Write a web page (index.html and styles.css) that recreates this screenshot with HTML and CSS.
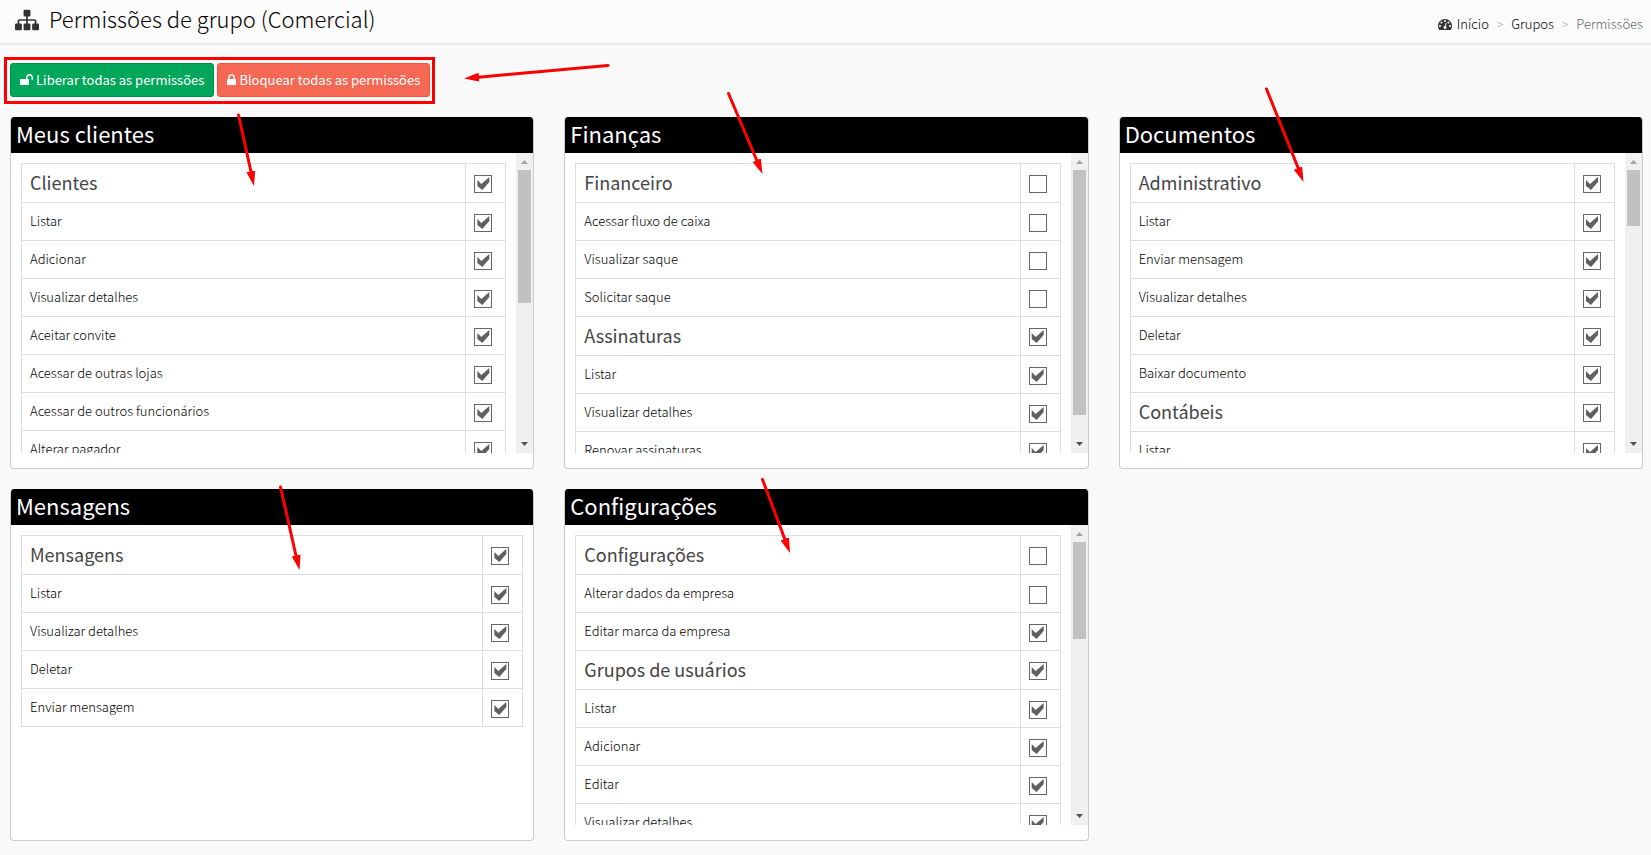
FILE: index.html
```
<!DOCTYPE html>
<html lang="pt-BR">
<head>
<meta charset="utf-8">
<title>Permissões de grupo (Comercial)</title>
<meta name="viewport" content="width=device-width, initial-scale=1">
<link rel="stylesheet" href="styles.css">
</head>
<body>
<header class="page-header">
  <h1 class="page-title">
    <svg class="title-icon" viewBox="0 0 1792 1792" aria-hidden="true"><path d="M1792 1248v320q0 40-28 68t-68 28h-320q-40 0-68-28t-28-68v-320q0-40 28-68t68-28h96v-192h-512v192h96q40 0 68 28t28 68v320q0 40-28 68t-68 28h-320q-40 0-68-28t-28-68v-320q0-40 28-68t68-28h96v-192h-512v192h96q40 0 68 28t28 68v320q0 40-28 68t-68 28h-320q-40 0-68-28t-28-68v-320q0-40 28-68t68-28h96v-192q0-52 38-90t90-38h512v-192h-96q-40 0-68-28t-28-68v-320q0-40 28-68t68-28h320q40 0 68 28t28 68v320q0 40-28 68t-68 28h-96v192h512q52 0 90 38t38 90v192h96q40 0 68 28t28 68z"/></svg>
    <span>Permissões de grupo (Comercial)</span>
  </h1>
  <nav class="breadcrumb" aria-label="Navegação">
    <a href="#"><svg class="crumb-icon" viewBox="0 0 1792 1792" aria-hidden="true"><path d="M384 1152q0-53-37.500-90.500t-90.500-37.500-90.500 37.500-37.500 90.500 37.500 90.500 90.500 37.500 90.500-37.500 37.500-90.500zm192-448q0-53-37.500-90.500t-90.500-37.500-90.500 37.500-37.500 90.500 37.500 90.500 90.500 37.500 90.500-37.500 37.500-90.500zm428 481l101-382q6-26-7.500-48.500t-38.500-29.500-48 6.500-30 39.500l-101 382q-60 5-107 43.500t-63 98.500q-20 77 20 146t117 89 146-20 89-117q16-60-6-117t-72-91zm660-33q0-53-37.500-90.500t-90.500-37.500-90.500 37.500-37.500 90.500 37.500 90.500 90.500 37.500 90.500-37.500 37.500-90.500zm-640-640q0-53-37.500-90.500t-90.500-37.500-90.500 37.500-37.500 90.500 37.500 90.500 90.500 37.500 90.500-37.500 37.500-90.500zm448 192q0-53-37.500-90.500t-90.500-37.500-90.500 37.500-37.500 90.500 37.500 90.500 90.500 37.500 90.500-37.500 37.500-90.500zm320 448q0 261-141 483-19 29-54 29h-1402q-35 0-54-29-141-221-141-483 0-182 71-348t191-286 286-191 348-71 348 71 286 191 191 286 71 348z"/></svg>Início</a>
    <span class="sep">&gt;</span>
    <a href="#">Grupos</a>
    <span class="sep">&gt;</span>
    <span class="current">Permissões</span>
  </nav>
</header>
<main class="content">
  <div class="toolbar">
    <button type="button" class="btn btn-success"><svg class="btn-icon unlock" viewBox="0 0 1664 1792" aria-hidden="true"><path d="M1664 576v256q0 26-19 45t-45 19h-64q-26 0-45-19t-19-45v-256q0-106-75-181t-181-75-181 75-75 181v192h96q40 0 68 28t28 68v576q0 40-28 68t-68 28h-960q-40 0-68-28t-28-68v-576q0-40 28-68t68-28h672v-192q0-185 131.500-316.500t316.500-131.500 316.500 131.500 131.500 316.500z"/></svg>Liberar todas as permissões</button>
    <button type="button" class="btn btn-danger"><svg class="btn-icon lock" viewBox="0 0 1152 1792" aria-hidden="true"><path d="M320 768h512v-192q0-106-75-181t-181-75-181 75-75 181v192zm832 96v576q0 40-28 68t-68 28h-960q-40 0-68-28t-28-68v-576q0-40 28-68t68-28h32v-192q0-184 132-316t316-132 316 132 132 316v192h32q40 0 68 28t28 68z"/></svg>Bloquear todas as permissões</button>
  </div>
  <div class="cards">
    <section class="card">
      <h2>Meus clientes</h2>
      <div class="pane">
        <div class="list"><table>
          <tr class="group"><th scope="row"><label for="a0">Clientes</label></th><td><input type="checkbox" id="a0" checked></td></tr>
          <tr><th scope="row"><label for="a1">Listar</label></th><td><input type="checkbox" id="a1" checked></td></tr>
          <tr><th scope="row"><label for="a2">Adicionar</label></th><td><input type="checkbox" id="a2" checked></td></tr>
          <tr><th scope="row"><label for="a3">Visualizar detalhes</label></th><td><input type="checkbox" id="a3" checked></td></tr>
          <tr><th scope="row"><label for="a4">Aceitar convite</label></th><td><input type="checkbox" id="a4" checked></td></tr>
          <tr><th scope="row"><label for="a5">Acessar de outras lojas</label></th><td><input type="checkbox" id="a5" checked></td></tr>
          <tr><th scope="row"><label for="a6">Acessar de outros funcionários</label></th><td><input type="checkbox" id="a6" checked></td></tr>
          <tr><th scope="row"><label for="a7">Alterar pagador</label></th><td><input type="checkbox" id="a7" checked></td></tr>
        </table></div>
        <div class="scrollbar" aria-hidden="true"><svg viewBox="0 0 17 17"><path class="up" d="M5 11L8.500 7L12 11z"/></svg><div class="track"><div class="thumb" style="height:50%"></div></div><svg viewBox="0 0 17 17"><path class="down" d="M5 6L8.500 10L12 6z"/></svg></div>
      </div>
    </section>
    <section class="card">
      <h2>Finanças</h2>
      <div class="pane">
        <div class="list"><table>
          <tr class="group"><th scope="row"><label for="b0">Financeiro</label></th><td><input type="checkbox" id="b0"></td></tr>
          <tr><th scope="row"><label for="b1">Acessar fluxo de caixa</label></th><td><input type="checkbox" id="b1"></td></tr>
          <tr><th scope="row"><label for="b2">Visualizar saque</label></th><td><input type="checkbox" id="b2"></td></tr>
          <tr><th scope="row"><label for="b3">Solicitar saque</label></th><td><input type="checkbox" id="b3"></td></tr>
          <tr class="group"><th scope="row"><label for="b4">Assinaturas</label></th><td><input type="checkbox" id="b4" checked></td></tr>
          <tr><th scope="row"><label for="b5">Listar</label></th><td><input type="checkbox" id="b5" checked></td></tr>
          <tr><th scope="row"><label for="b6">Visualizar detalhes</label></th><td><input type="checkbox" id="b6" checked></td></tr>
          <tr><th scope="row"><label for="b7">Renovar assinaturas</label></th><td><input type="checkbox" id="b7" checked></td></tr>
        </table></div>
        <div class="scrollbar" aria-hidden="true"><svg viewBox="0 0 17 17"><path class="up" d="M5 11L8.500 7L12 11z"/></svg><div class="track"><div class="thumb" style="height:92%"></div></div><svg viewBox="0 0 17 17"><path class="down" d="M5 6L8.500 10L12 6z"/></svg></div>
      </div>
    </section>
    <section class="card">
      <h2>Documentos</h2>
      <div class="pane">
        <div class="list"><table>
          <tr class="group"><th scope="row"><label for="c0">Administrativo</label></th><td><input type="checkbox" id="c0" checked></td></tr>
          <tr><th scope="row"><label for="c1">Listar</label></th><td><input type="checkbox" id="c1" checked></td></tr>
          <tr><th scope="row"><label for="c2">Enviar mensagem</label></th><td><input type="checkbox" id="c2" checked></td></tr>
          <tr><th scope="row"><label for="c3">Visualizar detalhes</label></th><td><input type="checkbox" id="c3" checked></td></tr>
          <tr><th scope="row"><label for="c4">Deletar</label></th><td><input type="checkbox" id="c4" checked></td></tr>
          <tr><th scope="row"><label for="c5">Baixar documento</label></th><td><input type="checkbox" id="c5" checked></td></tr>
          <tr class="group"><th scope="row"><label for="c6">Contábeis</label></th><td><input type="checkbox" id="c6" checked></td></tr>
          <tr><th scope="row"><label for="c7">Listar</label></th><td><input type="checkbox" id="c7" checked></td></tr>
        </table></div>
        <div class="scrollbar" aria-hidden="true"><svg viewBox="0 0 17 17"><path class="up" d="M5 11L8.500 7L12 11z"/></svg><div class="track"><div class="thumb" style="height:21%"></div></div><svg viewBox="0 0 17 17"><path class="down" d="M5 6L8.500 10L12 6z"/></svg></div>
      </div>
    </section>
    <section class="card">
      <h2>Mensagens</h2>
      <div class="pane">
        <div class="list"><table>
          <tr class="group"><th scope="row"><label for="d0">Mensagens</label></th><td><input type="checkbox" id="d0" checked></td></tr>
          <tr><th scope="row"><label for="d1">Listar</label></th><td><input type="checkbox" id="d1" checked></td></tr>
          <tr><th scope="row"><label for="d2">Visualizar detalhes</label></th><td><input type="checkbox" id="d2" checked></td></tr>
          <tr><th scope="row"><label for="d3">Deletar</label></th><td><input type="checkbox" id="d3" checked></td></tr>
          <tr><th scope="row"><label for="d4">Enviar mensagem</label></th><td><input type="checkbox" id="d4" checked></td></tr>
        </table></div>
      </div>
    </section>
    <section class="card">
      <h2>Configurações</h2>
      <div class="pane">
        <div class="list"><table>
          <tr class="group"><th scope="row"><label for="e0">Configurações</label></th><td><input type="checkbox" id="e0"></td></tr>
          <tr><th scope="row"><label for="e1">Alterar dados da empresa</label></th><td><input type="checkbox" id="e1"></td></tr>
          <tr><th scope="row"><label for="e2">Editar marca da empresa</label></th><td><input type="checkbox" id="e2" checked></td></tr>
          <tr class="group"><th scope="row"><label for="e3">Grupos de usuários</label></th><td><input type="checkbox" id="e3" checked></td></tr>
          <tr><th scope="row"><label for="e4">Listar</label></th><td><input type="checkbox" id="e4" checked></td></tr>
          <tr><th scope="row"><label for="e5">Adicionar</label></th><td><input type="checkbox" id="e5" checked></td></tr>
          <tr><th scope="row"><label for="e6">Editar</label></th><td><input type="checkbox" id="e6" checked></td></tr>
          <tr><th scope="row"><label for="e7">Visualizar detalhes</label></th><td><input type="checkbox" id="e7" checked></td></tr>
        </table></div>
        <div class="scrollbar" aria-hidden="true"><svg viewBox="0 0 17 17"><path class="up" d="M5 11L8.500 7L12 11z"/></svg><div class="track"><div class="thumb" style="height:36.5%"></div></div><svg viewBox="0 0 17 17"><path class="down" d="M5 6L8.500 10L12 6z"/></svg></div>
      </div>
    </section>
  </div>
</main>
<svg class="annotations" aria-hidden="true">
  <defs>
    <marker id="head" markerUnits="userSpaceOnUse" markerWidth="16" markerHeight="10" refX="15" refY="5" orient="auto"><path d="M0 0.500L15 5L0 9.500z" fill="#f00" stroke="none"/></marker>
  </defs>
  <rect x="5.500" y="58.500" width="428" height="44"/>
  <g stroke-linecap="round">
    <path d="M608 65.500L476 77.400"/><path d="M728.500 93.500L757.500 162"/><path d="M238.500 115L251.500 174"/>
    <path d="M1266.500 89L1299 170"/><path d="M280.500 487L296.500 558"/><path d="M762.500 479.500L785.500 541"/>
  </g>
  <g class="heads">
    <path d="M608 65.500L464 78.500"/><path d="M728.500 93.500L762.500 174"/><path d="M238.500 115L254 186"/>
    <path d="M1266.500 89L1303.500 182"/><path d="M280.500 487L299.500 570"/><path d="M762.500 479.500L790 553"/>
  </g>
</svg>
</body>
</html>
```
FILE: styles.css
```
* { box-sizing: border-box; }

body {
  margin: 0;
  position: relative;
  background: #f9f9f9;
  color: #000;
  font-family: "Noto Sans CJK SC", "Open Sans", sans-serif;
  font-size: 13px;
  font-weight: 300;
  line-height: 20px;
}

.page-header {
  display: flex;
  justify-content: space-between;
  align-items: flex-start;
  padding: 3px 8px 9px 15px;
  background: #fbfbfb;
  border-bottom: 1px solid #e5e5e5;
  box-shadow: 0 1px 1px #f1f1f1;
}

.page-title {
  display: flex;
  align-items: center;
  gap: 10px;
  margin: 0;
  font-size: 22px;
  font-weight: 300;
  line-height: 31px;
}

.title-icon { width: 24px; height: 24px; margin-top: 2px; fill: #333; }

.breadcrumb {
  display: flex;
  gap: 8px;
  padding-top: 11px;
}

.breadcrumb a {
  display: flex;
  align-items: center;
  gap: 5px;
  color: #000;
  text-decoration: none;
}

.crumb-icon { width: 14px; height: 14px; fill: #333; }
.sep { color: #999; font-size: 12px; }
.current { color: #666; }

.content { padding: 19px 8px 14px 10px; }

.toolbar {
  display: flex;
  gap: 3px;
  margin-bottom: 20px;
}

.btn {
  display: flex;
  align-items: center;
  gap: 3px;
  height: 34px;
  padding: 0 9px;
  border: 1px solid;
  border-radius: 3px;
  color: #fff;
  font: inherit;
  font-weight: 400;
  white-space: nowrap;
}

.btn-success { background: #00a65a; border-color: #008d4c; }
.btn-danger { background: #f56954; border-color: #f4543c; }
.btn-icon { height: 14px; fill: #fff; }
.unlock { width: 13px; }
.lock { width: 9px; }

.cards {
  display: grid;
  grid-template-columns: repeat(3, 1fr);
  gap: 20px 30px;
}

.card {
  padding-bottom: 15px;
  overflow: hidden;
  background: #fff;
  border: 1px solid #ccc;
  border-top: 0;
  border-radius: 4px;
}

.card h2 {
  margin: 0;
  padding: 0 5px 4px;
  background: #000;
  color: #fff;
  font-size: 22px;
  font-weight: 400;
  line-height: 32px;
}

.pane {
  display: flex;
  height: 300px;
}

.list {
  flex: 1;
  padding: 10px;
  overflow-y: auto;
  scrollbar-width: none;
}

.scrollbar {
  display: flex;
  flex-direction: column;
  width: 17px;
  background: #f0f0f0;
}

.scrollbar svg { display: block; width: 17px; height: 17px; }
.up { fill: #a3a3a3; }
.down { fill: #505050; }

.track {
  flex: 1;
  padding: 0 2px;
}

.thumb { background: #c1c1c1; }

table {
  width: 100%;
  border-collapse: collapse;
}

th, td {
  border: 1px solid #ddd;
  vertical-align: top;
}

th {
  padding: 7px 8px 9px;
  text-align: left;
  font-weight: inherit;
  line-height: 21px;
}

th label { display: block; }

.group th {
  color: #444;
  font-size: 18px;
  font-weight: 400;
  line-height: 22px;
}

td { width: 40px; padding: 11px 8px 0; }

input[type="checkbox"] {
  appearance: none;
  display: block;
  width: 18px;
  height: 18px;
  margin: 0;
  background: #fff;
  border: 1px solid #666;
}

input[type="checkbox"]:checked::before {
  content: "";
  display: block;
  width: 16px;
  height: 16px;
  background: #606060;
  clip-path: polygon(2px 4px, 6px 8px, 14px 1px, 14px 6px, 7px 14px, 2px 10px);
}

.annotations {
  position: absolute;
  top: 0;
  left: 0;
  width: 100%;
  height: 100%;
  fill: none;
  stroke: #f00;
  stroke-width: 3px;
  pointer-events: none;
}

.heads { stroke: transparent; }
.heads path { marker-end: url(#head); }
```
